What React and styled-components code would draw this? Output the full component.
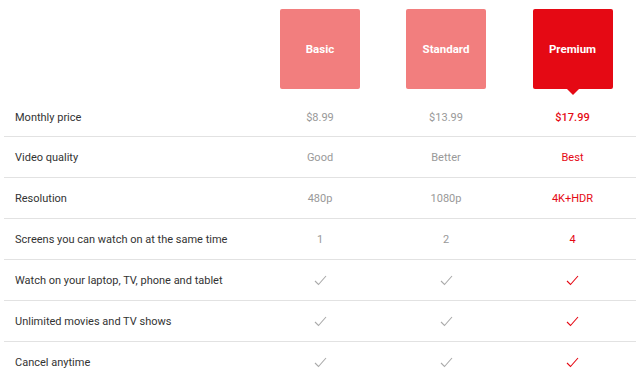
import React from "react";
import styled, { createGlobalStyle } from "styled-components";

const Global = createGlobalStyle`
  html, body { margin: 0; padding: 0; background: #fff; }
  body { font-family: "Roboto", "Liberation Sans", Arial, sans-serif; }
`;

const Page = styled.div`
  width: 640px;
  height: 384px;
  padding: 0 4px;
  box-sizing: border-box;
  overflow: hidden;
`;

const Grid = styled.div`
  display: grid;
  grid-template-columns: 1fr 126px 126px 127px;
`;

const HeaderCell = styled.div`
  height: 98px;
  display: flex;
  justify-content: center;
  padding-top: 9px;
  box-sizing: border-box;
`;

const PlanBox = styled.div`
  position: relative;
  width: 80px;
  height: 80px;
  border-radius: 2px;
  background: ${(p) => (p.$active ? "#e50914" : "#f27e7e")};
  color: #fff;
  font-weight: 700;
  font-size: 11.5px;
  display: flex;
  align-items: center;
  justify-content: center;
  &::after {
    content: "";
    display: ${(p) => (p.$active ? "block" : "none")};
    position: absolute;
    left: 50%;
    bottom: -6px;
    margin-left: -6px;
    border-left: 6px solid transparent;
    border-right: 6px solid transparent;
    border-top: 6px solid #e50914;
  }
`;

const Cell = styled.div`
  height: ${(p) => (p.$first ? "39px" : "41px")};
  display: flex;
  align-items: center;
  justify-content: ${(p) => (p.$label ? "flex-start" : "center")};
  padding-left: ${(p) => (p.$label ? "11px" : "0")};
  box-sizing: border-box;
  border-bottom: ${(p) => (p.$last ? "none" : "1px solid #e2e2e2")};
  font-size: 11px;
  color: ${(p) => (p.$label ? "#333" : p.$active ? "#e50914" : "#999")};
  font-weight: ${(p) => (p.$active && p.$bold ? 500 : 400)};
`;

const Check = ({ color }) => (
  <svg width="13" height="11" viewBox="0 0 13 11">
    <path d="M1 6 L4.5 9.5 L12 1" fill="none" stroke={color} strokeWidth="1.1" />
  </svg>
);

const plans = ["Basic", "Standard", "Premium"];

const rows = [
  { label: "Monthly price", values: ["$8.99", "$13.99", "$17.99"], bold: true },
  { label: "Video quality", values: ["Good", "Better", "Best"] },
  { label: "Resolution", values: ["480p", "1080p", "4K+HDR"] },
  { label: "Screens you can watch on at the same time", values: ["1", "2", "4"] },
  { label: "Watch on your laptop, TV, phone and tablet", check: true },
  { label: "Unlimited movies and TV shows", check: true },
  { label: "Cancel anytime", check: true },
];

export default function App() {
  return (
    <>
      <Global />
      <Page>
        <Grid>
          <HeaderCell />
          {plans.map((p, i) => (
            <HeaderCell key={p}>
              <PlanBox $active={i === 2}>{p}</PlanBox>
            </HeaderCell>
          ))}
          {rows.map((r, ri) => {
            const first = ri === 0;
            const last = ri === rows.length - 1;
            return (
              <React.Fragment key={r.label}>
                <Cell $label $first={first} $last={last}>{r.label}</Cell>
                {[0, 1, 2].map((ci) => (
                  <Cell
                    key={ci}
                    $first={first}
                    $last={last}
                    $active={ci === 2}
                    $bold={r.bold}
                  >
                    {r.check ? (
                      <Check color={ci === 2 ? "#e50914" : "#aaa"} />
                    ) : (
                      r.values[ci]
                    )}
                  </Cell>
                ))}
              </React.Fragment>
            );
          })}
        </Grid>
      </Page>
    </>
  );
}
